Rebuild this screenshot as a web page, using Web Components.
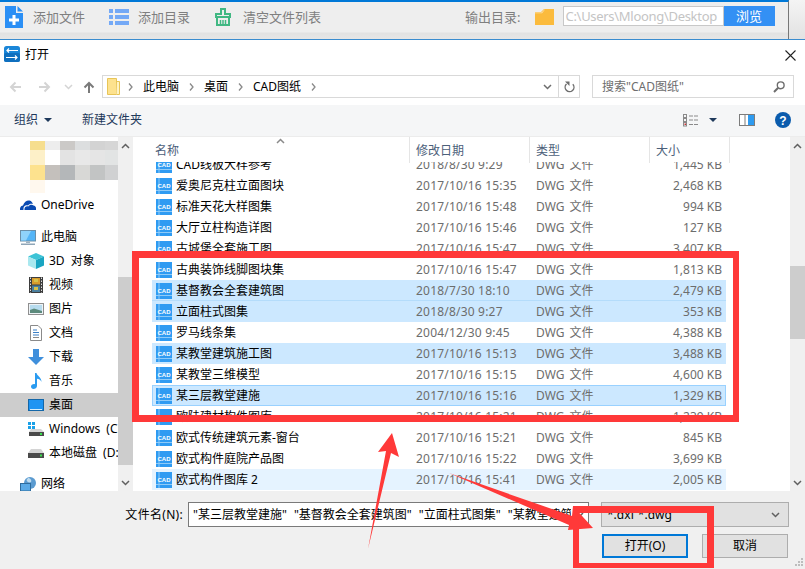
<!DOCTYPE html>
<html lang="zh">
<head>
<meta charset="utf-8">
<title>打开</title>
<style>
    html, body { margin: 0; padding: 0; background: #fff; }
    body { font: 12px/16px "Noto Sans", "Noto Sans CJK SC", sans-serif; color: #000; }
</style>
</head>
<body>
<app-window>
    <app-toolbar></app-toolbar>
    <file-dialog>
        <dialog-title slot="title"></dialog-title>
        <nav-bar slot="nav"></nav-bar>
        <cmd-bar slot="cmd"></cmd-bar>
        <side-nav slot="side">
            <nav-item icon="onedrive" top="0">OneDrive</nav-item>
            <nav-item icon="pc" top="8">此电脑</nav-item>
            <nav-item icon="cube" indent>3D 对象</nav-item>
            <nav-item icon="film" indent>视频</nav-item>
            <nav-item icon="picture" indent>图片</nav-item>
            <nav-item icon="doc" indent>文档</nav-item>
            <nav-item icon="download" indent>下载</nav-item>
            <nav-item icon="music" indent>音乐</nav-item>
            <nav-item icon="desktop" indent selected>桌面</nav-item>
            <nav-item icon="winDrive" indent>Windows (C:)</nav-item>
            <nav-item icon="drive" indent>本地磁盘 (D:)</nav-item>
            <nav-item icon="network" top="7">网络</nav-item>
        </side-nav>
        <file-pane slot="pane">
            <file-row name="CAD线板大样参考" date="2018/8/30 9:29" size="1,445 KB"></file-row>
            <file-row name="爱奥尼克柱立面图块" date="2017/10/16 15:35" size="2,468 KB"></file-row>
            <file-row name="标准天花大样图集" date="2017/10/16 15:48" size="994 KB"></file-row>
            <file-row name="大厅立柱构造详图" date="2017/10/16 15:46" size="127 KB"></file-row>
            <file-row name="古城堡全套施工图" date="2017/10/16 15:47" size="3,407 KB"></file-row>
            <file-row name="古典装饰线脚图块集" date="2017/10/16 15:47" size="1,813 KB"></file-row>
            <file-row name="基督教会全套建筑图" date="2018/7/30 18:10" size="2,479 KB" state="selected" edge></file-row>
            <file-row name="立面柱式图集" date="2018/8/30 9:27" size="353 KB" state="selected"></file-row>
            <file-row name="罗马线条集" date="2004/12/30 9:45" size="4,388 KB"></file-row>
            <file-row name="某教堂建筑施工图" date="2017/10/16 15:13" size="3,488 KB" state="selected"></file-row>
            <file-row name="某教堂三维模型" date="2017/10/16 15:15" size="4,600 KB"></file-row>
            <file-row name="某三层教堂建施" date="2017/10/16 15:16" size="1,329 KB" state="focus"></file-row>
            <file-row name="欧陆建材构件图库" date="2017/10/16 15:21" size="1,239 KB"></file-row>
            <file-row name="欧式传统建筑元素-窗台" date="2017/10/16 15:21" size="845 KB"></file-row>
            <file-row name="欧式构件庭院产品图" date="2017/10/16 15:22" size="3,699 KB"></file-row>
            <file-row name="欧式构件图库 2" date="2017/10/16 15:41" size="2,005 KB" state="hover"></file-row>
        </file-pane>
        <dialog-footer slot="footer"></dialog-footer>
    </file-dialog>
    <mark-up></mark-up>
</app-window>

<script>
const ICONS = {
    addFile: [18, 22, '<path fill="#2b8ff5" d="M0 0H11V7H18V22H0Z"/><path fill="#2b8ff5" d="M12.500 0L18 5.500H12.500Z"/><path fill="#fff" d="M7.500 9H10.500V12.500H14V15.500H10.500V19H7.500V15.500H4V12.500H7.500Z"/>'],
    list: [20, 16, '<g fill="#74a9f6"><rect y="0" width="4" height="4"/><rect y="6" width="4" height="4"/><rect y="12" width="4" height="4"/><rect x="6" y="0" width="14" height="4"/><rect x="6" y="6" width="14" height="4"/><rect x="6" y="12" width="14" height="4"/></g>'],
    broom: [16, 18, '<g fill="none" stroke="#41b883" stroke-width="2"><path d="M6 1H10V6H15V9H1V6H6Z"/><path d="M2 9V17H14V9"/></g><path stroke="#41b883" stroke-width="1.500" d="M5.500 12V17M8 12V17M10.500 12V17"/>'],
    folderOrange: [19, 16, '<path fill="#fbbb3d" d="M0 3H6L9 0H19V16H0Z"/><path fill="#fff" opacity=".6" d="M0 3.500H6.500L9.500 .500H10L7 4.200H0Z"/>'],
    dialog: [16, 16, '<rect width="16" height="16" rx="2.500" fill="#1a86d8"/><rect y="7" width="16" height="9" rx="2" fill="#0f6fbe"/><path fill="none" stroke="#fff" stroke-width="1.200" d="M14 4.500H3M5 2.500L3 4.500L5 6.500M2 11.500H13M11 9.500L13 11.500L11 13.500"/>'],
    arrowLeft: [12, 12, '<path fill="none" stroke="currentColor" stroke-width="2" d="M12 6H2M6.500 1.500L2 6L6.500 10.500"/>'],
    arrowRight: [12, 12, '<path fill="none" stroke="currentColor" stroke-width="2" d="M0 6H10M5.500 1.500L10 6L5.500 10.500"/>'],
    arrowUp: [12, 12, '<path fill="none" stroke="currentColor" stroke-width="2" d="M6 12V2M1.500 6.500L6 2L10.500 6.500"/>'],
    chevDown: [9, 6, '<path fill="none" stroke="currentColor" stroke-width="1.500" d="M1 1L4.500 4.500L8 1"/>'],
    chevUp: [9, 6, '<path fill="none" stroke="currentColor" stroke-width="1.500" d="M1 5L4.500 1.500L8 5"/>'],
    chevRight: [5, 8, '<path fill="none" stroke="currentColor" stroke-width="1.300" d="M1 .500L4 4L1 7.500"/>'],
    caret: [8, 4, '<path fill="currentColor" d="M0 0H8L4 4Z"/>'],
    folderNav: [13, 17, '<path fill="#fde28e" stroke="#e8c557" d="M.500 .500H9.500V16.500H.500Z"/><path fill="#fff3c4" stroke="#e8c557" d="M10 3.500H12.500V16.500H9.500"/>'],
    refresh: [11, 12, '<path fill="none" stroke="#6d6d6d" stroke-width="1.400" d="M8.800 3.200A4.400 4.400 0 1 1 2.500 3"/><path fill="#6d6d6d" d="M1 .500H5.500V5Z"/>'],
    search: [12, 12, '<circle cx="7.700" cy="4.300" r="3.400" fill="none" stroke="#6d6d6d" stroke-width="1.400"/><path stroke="#6d6d6d" stroke-width="2" d="M5.200 6.800L1 11"/>'],
    viewList: [16, 13, '<g fill="none" stroke="#8a8a8a"><rect x=".5" y=".5" width="3" height="3"/><rect x=".5" y="4.500" width="3" height="3"/><rect x=".5" y="8.500" width="3" height="3.500"/></g><path fill="#c33" d="M1.500 9.500H3V11H1.500Z"/><path stroke="#8a8a8a" d="M6 2H16M6 6H16M6 10.500H16" stroke-dasharray="4 1"/>'],
    panes: [16, 12, '<rect x=".5" y=".5" width="15" height="11" fill="#fff" stroke="#7c7c7c"/><path stroke="#7c7c7c" d="M6 .5V11.500"/><rect x="9" y="1" width="6" height="10" fill="#2e9bf0"/>'],
    close: [11, 11, '<path fill="none" stroke="#222" stroke-width="1.100" d="M.500 .500L10.500 10.500M10.500 .500L.500 10.500"/>'],
    cad: [16, 16, '<rect width="16" height="16" fill="#2f9bf2"/><path stroke="#8fcbf8" d="M0 12.500H16M3 0V16"/><text x="8" y="10.300" text-anchor="middle" fill="#fff" style="font:bold 6px Liberation Sans,sans-serif">CAD</text>'],
    onedrive: [16, 10, '<path fill="#094ab2" d="M0 10C-.4 7 1.500 5.500 3 5.500C4 2 7 0 9.500 0.500C11.500 1 12.500 2.500 13 4C11 3.500 9 4 8 5.500C6 4.500 3 5.500 3.500 10ZM4.500 10C4 7 6.500 5.500 8.300 6.500C9.500 4.500 12 4 13.500 5.500C15.500 5.500 16.500 8 16 10Z"/>'],
    pc: [16, 15, '<rect x=".5" y=".5" width="15" height="10.500" fill="#54b5f7" stroke="#6b8fa8"/><path fill="#8fd3fb" d="M1 1H11L6 10.500H1Z"/><rect x="6" y="11.500" width="4" height="1.500" fill="#9fb2c0"/><rect x="1" y="13.500" width="14" height="1.500" fill="#8fa6b8"/>'],
    cube: [16, 16, '<path fill="#3cc3d6" d="M8 0L16 3.500L8 7L0 3.500Z"/><path fill="#a9e8ef" d="M0 3.500L8 7V16L0 12.500Z"/><path fill="#19a5c2" d="M16 3.500L8 7V16L16 12.500Z"/>'],
    film: [14, 16, '<rect width="14" height="16" fill="#3d3d3d"/><rect x="3" y="1" width="8" height="6.500" fill="#d99b2b"/><rect x="3" y="8.500" width="8" height="6.500" fill="#4b7f9e"/><path fill="#d8c24a" d="M5 2H9V5H5ZM5 10H9V13H5Z"/><path stroke="#ddd" stroke-dasharray="1.500 1.500" d="M1.500 .5V16M12.500 .5V16"/>'],
    picture: [16, 12, '<rect x=".5" y=".5" width="15" height="11" fill="#eef3f6" stroke="#8f8f8f"/><rect x="2" y="2" width="12" height="8" fill="#b7dcef"/><path fill="#5c8a7c" d="M2 7L6 5.500L14 8V10H2Z"/>'],
    doc: [12, 16, '<path fill="#fff" stroke="#8a8a8a" d="M.500 .500H8L11.500 4V15.500H.500Z"/><path stroke="#3a7fc6" d="M3 5H7M3 7.500H9M3 10H9"/><path stroke="#8a8a8a" d="M3 12.500H9"/>'],
    download: [16, 16, '<path fill="#3f8fdc" d="M5 0H11V8H16L8 16L0 8H5Z"/>'],
    music: [11, 16, '<path fill="#2a9bf0" d="M4 0H5.500C6 3 10.500 4 10.500 9C10 7 8 6 6 5.800V13C6 15 4 16 2.500 16C1 16 0 15 0 13.500C0 12 1.500 11 3 11C3.400 11 3.700 11 4 11.200Z"/>'],
    desktop: [16, 12, '<rect x=".5" y=".5" width="15" height="11" fill="#1e94f2" stroke="#1467a8"/><path fill="#d5eefd" d="M2 10H14V11H2Z"/>'],
    winDrive: [16, 14, '<path fill="#19a0e8" d="M0 0H3V3H0ZM4 0H7V3H4ZM0 4H3V7H0ZM4 4H7V7H4Z"/><path fill="#d4d4d4" d="M3 7H13L16 10H1Z"/><rect x="1" y="10" width="15" height="4" fill="#4a4a4a"/><rect x="12" y="11" width="2" height="2" fill="#3be04e"/>'],
    drive: [16, 9, '<path fill="#d4d4d4" d="M3 0H13L16 4H0Z"/><rect y="4" width="16" height="5" fill="#4a4a4a"/><rect x="12" y="5.500" width="2" height="2" fill="#3be04e"/>'],
    network: [16, 15, '<circle cx="10" cy="6" r="6" fill="#5b9bd0"/><path fill="#bfdcf0" d="M8 1C10 1 12 3 11 5C9 6 7 5 6.500 3Z"/><rect x=".5" y="6.500" width="10" height="7.500" fill="#5aa9e6" stroke="#2f6c9d"/>']
};

class BaseElement extends HTMLElement {
    constructor() {
        super();
        this.attachShadow({mode: 'open'});
        this.shadowRoot.innerHTML = this.constructor.markup;
    }
}

class AppIcon extends BaseElement {
    static markup = `<style>:host { display: block; line-height: 0; flex: none; }</style>`;

    connectedCallback() {
        const [w, h, body] = ICONS[this.getAttribute('name')];
        this.shadowRoot.innerHTML += `<svg width="${w}" height="${h}" viewBox="0 0 ${w} ${h}">${body}</svg>`;
    }
}

class AppWindow extends BaseElement {
    static markup = `
        <style>
            :host { display: flex; flex-direction: column; position: relative; width: 805px; height: 569px; overflow: hidden; }
        </style>
        <slot></slot>`;
}

class AppToolbar extends BaseElement {
    static markup = `
        <style>
            :host { display: flex; height: 39px; flex: none; font-size: 13px; color: #7f7f7f; background: linear-gradient(#f4f4f4, #e2e2e2); }
            .bar { flex: 1; display: flex; align-items: flex-start; border-top: 2px solid #0078d7; border-right: 1px solid #777;
                   background: linear-gradient(#eee 0, #eee 30px, #e2e2e2 31px, #e6e6e6 37px); }
            .tool { display: flex; align-items: center; height: 30px; }
            .tool span { line-height: 18px; }
            .add { margin-left: 5px; width: 104px; }
            .add span { margin-left: 10px; }
            .dir { width: 106px; }
            .dir span { margin-left: 9px; }
            .clear span { margin-left: 12px; }
            .clear { margin-right: 144px; }
            .out { margin-left: 0; }
            .folder { margin: 0 9px 0 14px; }
            .path { display: flex; margin-top: 4px; height: 20px; }
            .path div { box-sizing: border-box; width: 161px; padding: 0 2px; border: 1px solid #c8c8c8; background: #fff; color: #c4c4c4;
                        font-size: 13px; letter-spacing: -.3px; line-height: 18px; white-space: nowrap; overflow: hidden; }
            .path button { width: 51px; margin: 0; padding: 0; border: 0; background: #3390f4; color: #fff; font: inherit; }
            .gutter { width: 16px; }
        </style>
        <div class="bar">
            <div class="tool add"><app-icon name="addFile"></app-icon><span>添加文件</span></div>
            <div class="tool dir"><app-icon name="list"></app-icon><span>添加目录</span></div>
            <div class="tool clear"><app-icon name="broom"></app-icon><span>清空文件列表</span></div>
            <div class="tool out"><span>输出目录:</span><app-icon class="folder" name="folderOrange"></app-icon></div>
            <div class="path"><div>C:\\Users\\Mloong\\Desktop</div><button>浏览</button></div>
        </div>
        <div class="gutter"></div>`;
}

class FileDialog extends BaseElement {
    static markup = `
        <style>
            :host { display: flex; flex-direction: column; flex: 1; min-height: 0; background: #fff; border-top: 1px solid #3a8ccf; }
            .body { display: flex; height: 354px; flex: none; }
        </style>
        <slot name="title"></slot>
        <slot name="nav"></slot>
        <slot name="cmd"></slot>
        <div class="body"><slot name="side"></slot><slot name="pane"></slot></div>
        <slot name="footer"></slot>`;
}

class DialogTitle extends BaseElement {
    static markup = `
        <style>
            :host { display: flex; height: 35px; flex: none; box-sizing: border-box; padding: 6px 9px 0 4px; align-items: flex-start; }
            span { margin-left: 5px; line-height: 18px; }
            .close { margin: 4px 0 0 auto; }
        </style>
        <app-icon name="dialog"></app-icon><span>打开</span>
        <app-icon class="close" name="close"></app-icon>`;
}

class NavBar extends BaseElement {
    static markup = `
        <style>
            :host { display: flex; height: 30px; flex: none; box-sizing: border-box; padding: 0 11px 7px 9px; align-items: center; color: #6d6d6d; }
            .off { color: #d4d4d4; }
            .box { box-sizing: border-box; height: 23px; border: 1px solid #d9d9d9; display: flex; align-items: center; }
            .address { width: 478px; margin-left: 7px; padding-left: 4px; color: #000; }
            .crumb { line-height: 18px; white-space: nowrap; }
            .sep { margin: 0 10px; color: #8a8a8a; }
            .first { margin-left: 8px; }
            .drop { margin-left: auto; margin-right: 6px; color: #6d6d6d; }
            .refresh { width: 20px; height: 21px; display: flex; align-items: center; justify-content: center; border-left: 1px solid #d9d9d9; }
            .search { width: 202px; margin-left: 12px; padding: 0 8px 0 9px; color: #6d6d6d; justify-content: space-between; }
        </style>
        <app-icon class="off" name="arrowLeft"></app-icon>
        <app-icon class="off" name="arrowRight" style="margin-left:18px"></app-icon>
        <app-icon class="off" name="chevDown" style="margin-left:13px"></app-icon>
        <app-icon name="arrowUp" style="margin-left:10px;color:#7a7a7a"></app-icon>
        <div class="box address">
            <app-icon name="folderNav"></app-icon>
            <app-icon class="sep first" name="chevRight"></app-icon><span class="crumb">此电脑</span>
            <app-icon class="sep" name="chevRight"></app-icon><span class="crumb">桌面</span>
            <app-icon class="sep" name="chevRight"></app-icon><span class="crumb">CAD图纸</span>
            <app-icon class="sep" name="chevRight"></app-icon>
            <app-icon class="drop" name="chevDown"></app-icon>
            <div class="refresh"><app-icon name="refresh"></app-icon></div>
        </div>
        <div class="box search"><span class="crumb">搜索"CAD图纸"</span><app-icon name="search"></app-icon></div>`;
}

class CmdBar extends BaseElement {
    static markup = `
        <style>
            :host { display: flex; height: 32px; flex: none; box-sizing: border-box; padding: 0 14px 1px; align-items: center;
                    background: #f5f6f7; border-bottom: 1px solid #ececec; color: #1e395b; }
            span { line-height: 18px; }
            .caret { margin-left: 6px; color: #1e395b; }
            .new { margin-left: 30px; }
            .view { margin-left: auto; }
        </style>
        <span>组织</span><app-icon class="caret" name="caret"></app-icon>
        <span class="new">新建文件夹</span>
        <app-icon class="view" name="viewList"></app-icon>
        <app-icon class="caret" name="caret" style="margin-left:10px"></app-icon>
        <app-icon name="panes" style="margin-left:22px"></app-icon>
        <svg style="margin-left:20px" width="16" height="16" viewBox="0 0 16 16">
            <circle cx="8" cy="8" r="8" fill="#0b5cad"/>
            <text x="8" y="12.500" text-anchor="middle" fill="#fff" style="font:bold 12px 'Liberation Sans',sans-serif">?</text>
        </svg>`;
}

class ScrollBar extends BaseElement {
    static markup = `
        <style>
            :host { display: flex; flex-direction: column; width: 15px; flex: none; background: #f0f0f0; color: #606060; align-items: center; }
            .cap { height: 17px; flex: none; display: flex; align-items: center; }
            .thumb { width: 15px; background: #cdcdcd; }
            .end { margin-top: auto; }
        </style>
        <div class="cap"><app-icon name="chevUp"></app-icon></div>
        <div class="thumb"></div>
        <div class="cap end"><app-icon name="chevDown"></app-icon></div>`;

    connectedCallback() {
        const thumb = this.shadowRoot.querySelector('.thumb');
        thumb.style.marginTop = this.getAttribute('thumb-start') + 'px';
        thumb.style.height = this.getAttribute('thumb-size') + 'px';
    }
}

class SideNav extends BaseElement {
    static markup = `
        <style>
            :host { display: flex; width: 133px; flex: none; overflow: hidden; }
            .tree { width: 118px; flex: none; overflow: hidden; padding-top: 4px; box-sizing: border-box; }
            .mosaic { display: grid; grid-template-columns: repeat(6, 15px); grid-template-rows: 9px 15px 15px 13px; margin-left: 30px; height: 52px; }
        </style>
        <div class="tree">
            <div class="mosaic" id="mosaic"></div>
            <slot></slot>
        </div>
        <scroll-bar thumb-start="123" thumb-size="188"></scroll-bar>`;

    connectedCallback() {
        // blurred user folders, kept as flat cells
        const cells = ['f6de8e', 'ededed', 'cbc9c7', 'dcdedf', 'd3d3d3', 'd6d6d6',
                       'fdf0c8', 'ffffff', 'e3e3e3', 'e8e8e8', 'e5e5e5', 'e2e4e4',
                       'fde28e', 'c4c0bc', 'b4b7b9', 'd8d8d6', 'c2c4c4', 'd0d1d2',
                       'fff8ee', 'ffffff', 'ffffff', 'ffffff', 'ffffff', 'ffffff'];
        this.shadowRoot.querySelector('#mosaic').innerHTML =
            cells.map((c) => `<div style="background:#${c}"></div>`).join('');
    }
}

class NavItem extends BaseElement {
    static markup = `
        <style>
            :host { display: flex; height: 24px; align-items: center; overflow: hidden; white-space: nowrap; color: #000; }
            :host([selected]) { background: #cdcdcd; }
            .slot { width: 16px; margin: 0 5px 0 20px; display: flex; justify-content: center; flex: none; }
            :host([indent]) .slot { margin-left: 28px; }
            span { line-height: 18px; word-spacing: 3px; }
        </style>
        <div class="slot"></div><span><slot></slot></span>`;

    connectedCallback() {
        const icon = document.createElement('app-icon');
        icon.setAttribute('name', this.getAttribute('icon'));
        this.shadowRoot.querySelector('.slot').append(icon);
        if (this.hasAttribute('top')) {
            this.style.marginTop = this.getAttribute('top') + 'px';
        }
    }
}

class FilePane extends BaseElement {
    static markup = `
        <style>
            :host { display: flex; flex: 1; min-width: 0; overflow: hidden; }
            .main { flex: 1; min-width: 0; display: flex; flex-direction: column; }
            .head { display: flex; height: 25px; flex: none; padding-left: 17px; color: #4c607a; position: relative; z-index: 1; background: #fff; }
            .head div { box-sizing: border-box; border-right: 1px solid #e5e5e5; padding: 6px 0 0 6px; line-height: 16px; height: 26px; }
            .sort { position: absolute; left: 143px; top: 1px; color: #8a8a8a; }
            .list { flex: 1; min-height: 0; overflow: hidden; padding-left: 19px; }
            .rows { margin-top: -8px; width: 574px; }
        </style>
        <div class="main">
            <div class="head">
                <div style="width:260px;padding-left:5px">名称</div>
                <div style="width:120px">修改日期</div>
                <div style="width:120px">类型</div>
                <div style="width:80px">大小</div>
                <app-icon class="sort" name="chevUp"></app-icon>
            </div>
            <div class="list"><div class="rows"><slot></slot></div></div>
        </div>
        <scroll-bar thumb-start="112" thumb-size="73"></scroll-bar>`;
}

class FileRow extends BaseElement {
    static markup = `
        <style>
            :host { display: grid; grid-template-columns: 20px 240px 120px 113px 73px; box-sizing: border-box; height: 21px; padding: 0 4px;
                    align-items: center; line-height: 18px; color: #6d6d6d; white-space: nowrap; }
            :host([state="selected"]) { background: #cce8ff; }
            :host([state="hover"]) { background: #e5f3ff; }
            :host([state="focus"]) { background: #cce8ff; box-shadow: inset 0 0 0 1px #99d1ff; }
            :host([edge]) { box-shadow: inset 0 -1px 0 #b4dcfb; }
            .name { color: #000; }
            .date { letter-spacing: .2px; }
            .type { word-spacing: 2px; }
            .size { text-align: right; }
        </style>
        <app-icon name="cad"></app-icon>
        <span class="name"></span><span class="date"></span><span class="type">DWG 文件</span><span class="size"></span>`;

    connectedCallback() {
        for (const key of ['name', 'date', 'size']) {
            this.shadowRoot.querySelector('.' + key).textContent = this.getAttribute(key);
        }
    }
}

class DialogFooter extends BaseElement {
    static markup = `
        <style>
            :host { display: flex; flex-direction: column; flex: 1; background: #f0f0f0; box-sizing: border-box; padding-top: 11px; position: relative; }
            .line { display: flex; align-items: center; height: 25px; }
            label { width: 183px; text-align: right; line-height: 18px; color: #000; letter-spacing: .3px; }
            .name { box-sizing: border-box; width: 401px; height: 25px; margin-left: 5px; padding-left: 4px; display: flex; align-items: center; justify-content: space-between;
                    background: #fff; border: 1px solid #7a7a7a; line-height: 18px; }
            .name span { overflow: hidden; white-space: nowrap; flex: 1; word-spacing: 4px; }
            .name app-icon { margin: 0 4px; color: #606060; }
            .type { box-sizing: border-box; width: 188px; height: 25px; margin-left: 12px; padding: 0 5px; display: flex; align-items: center; justify-content: space-between;
                    background: #e1e1e1; border: 1px solid #adadad; line-height: 18px; color: #000; }
            .type app-icon { color: #606060; margin-right: 3px; }
            .actions { display: flex; margin: 7px 0 0 602px; }
            button { box-sizing: border-box; width: 86px; height: 24px; margin: 0; padding: 0; background: #e1e1e1; border: 1px solid #adadad; font: inherit; line-height: 18px; color: #000; }
            button.primary { border: 2px solid #0078d7; margin-right: 14px; }
            .grip { position: absolute; right: 1px; bottom: 1px; }
        </style>
        <div class="line">
            <label>文件名(N):</label>
            <div class="name"><span>"某三层教堂建施" "基督教会全套建筑图" "立面柱式图集" "某教堂建筑施工图"</span><app-icon name="chevDown"></app-icon></div>
            <div class="type"><span>*.dxf *.dwg</span><app-icon name="chevDown"></app-icon></div>
        </div>
        <div class="actions"><button class="primary">打开(O)</button><button>取消</button></div>
        <svg class="grip" width="10" height="10" viewBox="0 0 10 10" fill="#bdbdbd">
            <path d="M7 0h2v2H7zM4 3h2v2H4zM7 3h2v2H7zM1 6h2v2H1zM4 6h2v2H4zM7 6h2v2H7z"/>
        </svg>`;
}

// red hand-drawn annotation on top of the screenshot
class MarkUp extends BaseElement {
    static markup = `
        <style>
            :host { position: absolute; left: 0; top: 0; width: 805px; height: 569px; pointer-events: none; }
            svg { display: block; }
        </style>
        <svg width="805" height="569" viewBox="0 0 805 569" fill="#ff3939">
            <path fill-rule="evenodd" d="M132 251H739V422H132Z M139 258V415H733V258Z"/>
            <path fill-rule="evenodd" d="M573 506H714V568H573Z M579 513V563H707V513Z"/>
            <polygon points="368,549 386,451 378,452 392,433 399,457 391,453"/>
            <polygon points="449,473 572,516 573,506 593,528 568,530 569,525"/>
        </svg>`;
}

customElements.define('app-icon', AppIcon);
customElements.define('app-window', AppWindow);
customElements.define('app-toolbar', AppToolbar);
customElements.define('file-dialog', FileDialog);
customElements.define('dialog-title', DialogTitle);
customElements.define('nav-bar', NavBar);
customElements.define('cmd-bar', CmdBar);
customElements.define('scroll-bar', ScrollBar);
customElements.define('side-nav', SideNav);
customElements.define('nav-item', NavItem);
customElements.define('file-pane', FilePane);
customElements.define('file-row', FileRow);
customElements.define('dialog-footer', DialogFooter);
customElements.define('mark-up', MarkUp);
</script>
</body>
</html>
